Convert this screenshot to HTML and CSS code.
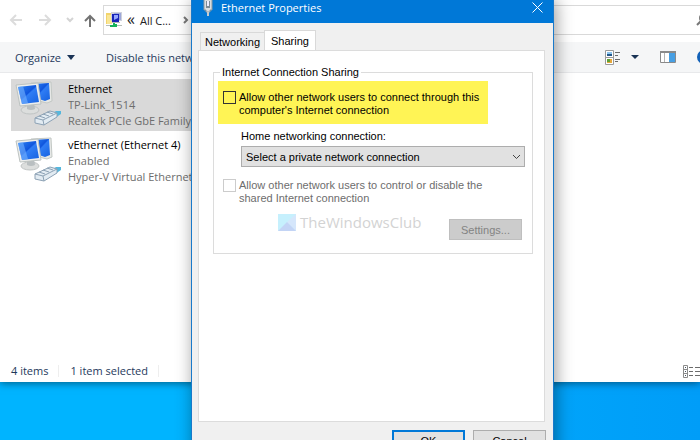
FILE: index.html
```html
<!DOCTYPE html>
<html lang="en">

<head>
    <meta charset="UTF-8">
    <meta name="viewport" content="width=device-width, initial-scale=1.0">
    <title>Ethernet Properties</title>
    <link rel="stylesheet" href="styles.css">
</head>

<body>
    <svg class="defs" width="0" height="0" aria-hidden="true">
        <defs>
            <linearGradient id="screen" x1="0" y1="0" x2="1" y2="1">
                <stop offset="0" stop-color="#2f86f5" />
                <stop offset="0.45" stop-color="#0f55dd" />
                <stop offset="0.5" stop-color="#2f7df5" />
                <stop offset="1" stop-color="#1762e0" />
            </linearGradient>
            <symbol id="network" viewBox="0 0 48 48">
                <path d="M16 2 L36 1 L37 20 L32 22 L16 18z" fill="#e6e8e6" stroke="#c3c8c5" />
                <path d="M18 3 L34 2 L35 18 L30 20 L18 16z" fill="url(#screen)" />
                <ellipse cx="15" cy="29" rx="9" ry="4" fill="#dcdedd" stroke="#c0c4c4" />
                <path d="M12 22 h7 l1 6 q-4 2 -8 0z" fill="#b9bfc1" />
                <path d="M1 4 L23 2 L26 23 L5 25z" fill="#eceeed" stroke="#bdc3c1" />
                <path d="M3 6 L21 4 L24 21 L7 23z" fill="url(#screen)" />
                <path d="M3 6 L8 5 L13 22 L7 23z" fill="#74b2ff" opacity="0.6" />
                <path d="M36 33 L41 30 L46 30 L46 33 L40 37z" fill="#55b7dd" />
                <path d="M20 37 L35 30 L42 32 L42 36 L29 44 L20 42z" fill="#e2ebf2" stroke="#8da2b5" />
                <path d="M20 37 L28 39 L42 32 M28 39 L29 44 M24 35 l6 2 M28 33 l6 2 M32 31 l6 2" fill="none" stroke="#8da2b5" />
            </symbol>
        </defs>
    </svg>

    <main class="explorer">
        <nav class="nav-bar">
            <button type="button" aria-label="Back">
                <svg width="14" height="12" viewBox="0 0 14 12"><path d="M13 6H2M7 1L2 6l5 5" fill="none" stroke="#dcdcdc" stroke-width="2" /></svg>
            </button>
            <button type="button" aria-label="Forward">
                <svg width="14" height="12" viewBox="0 0 14 12"><path d="M1 6h11M7 1l5 5-5 5" fill="none" stroke="#dcdcdc" stroke-width="2" /></svg>
            </button>
            <button type="button" class="recent" aria-label="Recent locations">
                <svg width="8" height="6" viewBox="0 0 8 6"><path d="M1 1l3 3 3-3" fill="none" stroke="#d4d4d4" stroke-width="2" /></svg>
            </button>
            <button type="button" aria-label="Up">
                <svg width="12" height="13" viewBox="0 0 12 13"><path d="M6 13V2M1 7l5-5 5 5" fill="none" stroke="#737373" stroke-width="2" /></svg>
            </button>
            <div class="address">
                <svg width="16" height="16" viewBox="0 0 16 16">
                    <path d="M0 1h5l1 1v10H0z" fill="#f2d46c" />
                    <path d="M1 3h5v9H1z" fill="#f9e696" />
                    <rect x="5" y="0" width="11" height="9" fill="#cfd1dc" />
                    <rect x="8" y="1" width="7" height="7" fill="#9ea8d9" />
                    <rect x="6" y="2" width="7" height="8" fill="#1723b8" />
                    <path d="M8 3h4v3L8 8z" fill="#95a6ff" />
                    <rect x="6" y="10" width="8" height="1" fill="#b4b4bd" />
                    <path d="M0 13h16v1H0z" fill="#b6bdb9" />
                    <path d="M7 11h2v1h2v3H4v-2h3z" fill="#17b35b" />
                </svg>
                <span class="chevrons">«</span>
                <span>All C...</span>
                <svg class="crumb" width="6" height="8" viewBox="0 0 6 8"><path d="M1 1l3 3-3 3" fill="none" stroke="#777" stroke-width="2" /></svg>
                <svg class="search" width="12" height="12" viewBox="0 0 12 12"><path d="M1 11l4-4" stroke="#777" stroke-width="2" /><circle cx="7" cy="4" r="3" fill="none" stroke="#777" stroke-width="2" /></svg>
            </div>
        </nav>

        <div class="toolbar">
            <button type="button">Organize <svg width="8" height="5" viewBox="0 0 8 5"><path d="M0 0h8L4 5z" fill="#1a3355" /></svg></button>
            <button type="button">Disable this network device</button>
            <div class="view-tools">
                <button type="button" aria-label="Change view">
                    <svg width="15" height="15" viewBox="0 0 15 15">
                        <path d="M0.500 0.500h8v14h-8zM0.500 7.500h8" fill="#fff" stroke="#9a9a9a" />
                        <path d="M2 2h5v4H2z" fill="#8cc5f0" />
                        <path d="M2 4h5v2H2z" fill="#25598a" />
                        <path d="M2 9h5v4H2z" fill="#e6a83b" />
                        <path d="M2 9h3v3H2z" fill="#5f9f35" />
                        <path d="M10 2.500h5M10 5.500h3M10 9.500h5M10 11.500h3" stroke="#6c6c6c" />
                    </svg>
                    <svg width="8" height="4" viewBox="0 0 8 4"><path d="M0 0h8L4 4z" fill="#1a3355" /></svg>
                </button>
                <button type="button" aria-label="Preview pane">
                    <svg width="16" height="12" viewBox="0 0 16 12">
                        <path d="M0.500 0.500h15v11h-15z" fill="#fff" stroke="#8a8a8a" />
                        <path d="M0 0h16v2H0z" fill="#8a8a8a" />
                        <path d="M4.500 2v9" stroke="#b5b5b5" />
                        <path d="M9 2h6v9H9z" fill="#479fe3" />
                    </svg>
                </button>
                <button type="button" aria-label="Help">
                    <svg width="14" height="14" viewBox="0 0 14 14"><circle cx="7" cy="7" r="7" fill="#1261b8" /></svg>
                </button>
            </div>
        </div>

        <ul class="connections">
            <li class="connection selected">
                <svg width="48" height="48"><use href="#network" /></svg>
                <div>
                    <p class="name">Ethernet</p>
                    <p>TP-Link_1514</p>
                    <p>Realtek PCIe GbE Family Controller</p>
                </div>
            </li>
            <li class="connection">
                <svg width="48" height="48"><use href="#network" /></svg>
                <div>
                    <p class="name">vEthernet (Ethernet 4)</p>
                    <p>Enabled</p>
                    <p>Hyper-V Virtual Ethernet Adapter</p>
                </div>
            </li>
        </ul>

        <footer class="status-bar">
            <span>4 items</span>
            <span>1 item selected</span>
            <svg width="17" height="13" viewBox="0 0 17 13">
                <path d="M0.500 0.500h4v12h-4zM0.500 4.500h4M0.500 8.500h4" fill="none" stroke="#8b8b8b" />
                <path d="M2 2.500h1M2 6.500h1M2 10.500h1" stroke="#456" />
                <path d="M6 2.500h4M12 2.500h5M6 6.500h4M12 6.500h5M6 10.500h4M12 10.500h5" stroke="#6c6c6c" />
            </svg>
        </footer>
    </main>

    <section class="dialog" role="dialog" aria-labelledby="dialog-title">
        <header class="title-bar">
            <svg width="10" height="17" viewBox="0 0 10 17">
                <path d="M1 0h8v11H7v2H3v-2H1z" fill="#d8dde0" stroke="#8b979f" />
                <path d="M3 2h4v7H3z" fill="#7d8b95" />
                <path d="M4 2h2v5H4z" fill="#eef" />
                <path d="M5 13v4" stroke="#c5ccd2" stroke-width="2" />
            </svg>
            <h1 id="dialog-title">Ethernet Properties</h1>
            <button type="button" aria-label="Close">
                <svg width="11" height="11" viewBox="0 0 11 11"><path d="M0.500 0.500l10 10M10.500 0.500l-10 10" stroke="#fff" /></svg>
            </button>
        </header>

        <div class="dialog-body">
            <div class="tabs" role="tablist">
                <button type="button" role="tab" class="tab">Networking</button>
                <button type="button" role="tab" class="tab active" aria-selected="true">Sharing</button>
            </div>

            <form class="panel" id="sharing">
                <fieldset>
                    <legend>Internet Connection Sharing</legend>
                    <div class="option highlight">
                        <input type="checkbox" id="allow-connect">
                        <label for="allow-connect">Allow other network users to connect through this computer's Internet connection</label>
                    </div>
                    <div class="home">
                        <label for="home-network">Home networking connection:</label>
                        <select id="home-network">
                            <option>Select a private network connection</option>
                        </select>
                    </div>
                    <div class="option disabled">
                        <input type="checkbox" id="allow-control" disabled>
                        <label for="allow-control">Allow other network users to control or disable the shared Internet connection</label>
                    </div>
                    <div class="settings">
                        <div class="watermark">
                            <svg width="18" height="17" viewBox="0 0 18 17">
                                <path d="M0 0h18v17H0z" fill="#c6f0fd" />
                                <path d="M18 0v17L9 8z" fill="#d5e6fb" />
                                <path d="M0 17L9 8l9 9z" fill="#c3d4f5" />
                            </svg>
                            <span>TheWindowsClub</span>
                        </div>
                        <button type="button" class="push" disabled>Settings...</button>
                    </div>
                </fieldset>
            </form>

            <div class="actions">
                <button type="submit" form="sharing" class="push default">OK</button>
                <button type="button" class="push">Cancel</button>
            </div>
        </div>
    </section>
</body>

</html>
```

FILE: styles.css
```css
* {
    margin: 0;
    padding: 0;
    box-sizing: border-box;
}

body {
    position: relative;
    display: flex;
    flex-direction: column;
    height: 100vh;
    padding-bottom: 58px;
    overflow: hidden;
    background: linear-gradient(to right, #00b4ff 25%, #009df8);
    font-family: "Open Sans", "Noto Sans", sans-serif;
    font-size: 11px;
}

button {
    border: none;
    background: none;
    font: inherit;
    color: inherit;
}

svg {
    display: block;
    flex-shrink: 0;
}

.defs {
    position: absolute;
}

/* Explorer window */
.explorer {
    flex: 1;
    display: flex;
    flex-direction: column;
    overflow: hidden;
    background-color: white;
    color: #1e395b;
    box-shadow: 0 1px 8px rgba(0, 0, 0, 0.5);
}

.nav-bar {
    display: flex;
    align-items: center;
    gap: 15px;
    height: 42px;
    padding: 5px 0 7px 9px;
}

.nav-bar .recent {
    margin: 0 -5px 0 -1px;
}

.address {
    flex: 1;
    align-self: stretch;
    display: flex;
    align-items: center;
    gap: 7px;
    margin: 0 -9px 0 -8px;
    padding-left: 2px;
    border: 1px solid #d9d9d9;
    color: #222;
}

.chevrons {
    margin: 0 -2px;
    padding-bottom: 3px;
    font-size: 16px;
    line-height: 16px;
}

.crumb {
    margin-left: 5px;
}

.search {
    margin-left: auto;
}

.toolbar {
    display: flex;
    align-items: center;
    gap: 31px;
    height: 31px;
    padding-left: 15px;
    background-color: #f5f6f7;
    border-bottom: 1px solid #e8e9eb;
}

.toolbar button {
    display: flex;
    align-items: center;
    gap: 6px;
    white-space: nowrap;
}

.view-tools {
    display: flex;
    gap: 21px;
    margin-left: auto;
    margin-right: -11px;
}

.view-tools button:first-child {
    gap: 11px;
}

.connections {
    flex: 1;
    padding: 6px 11px;
    list-style: none;
}

.connection {
    display: flex;
    gap: 5px;
    width: 250px;
    margin-bottom: 4px;
    padding: 2px 4px;
    color: #6d6d6d;
    line-height: 16px;
    white-space: nowrap;
    overflow: hidden;
}

.connection.selected {
    background-color: #d9d9d9;
}

.connection .name {
    color: black;
}

.status-bar {
    display: flex;
    align-items: center;
    height: 22px;
    padding-left: 11px;
}

.status-bar span {
    margin-right: 11px;
    padding-right: 10px;
    border-right: 1px solid #eeeeee;
    line-height: 12px;
}

.status-bar svg {
    margin-left: auto;
}

/* Properties dialog */
.dialog {
    position: absolute;
    top: 0;
    bottom: -20px;
    left: 191px;
    display: flex;
    flex-direction: column;
    width: 363px;
    background-color: #f0f0f0;
    border: 1px solid #1979ca;
    border-top: none;
    box-shadow: 2px 0 16px rgba(0, 0, 0, 0.4);
    color: black;
    font-family: "Liberation Sans", Arial, sans-serif;
    font-size: 11px;
}

.title-bar {
    display: flex;
    align-items: center;
    gap: 8px;
    height: 23px;
    padding: 0 10px 9px 11px;
    background-color: #0078d7;
    color: white;
}

.title-bar h1 {
    flex: 1;
    font-family: "Open Sans", "Noto Sans", sans-serif;
    font-size: 11px;
    font-weight: normal;
}

.dialog-body {
    flex: 1;
    display: flex;
    flex-direction: column;
    padding: 7px 8px 8px 6px;
}

.tabs {
    display: flex;
    align-items: flex-end;
    padding-left: 2px;
}

.tab {
    height: 18px;
    padding: 0 4px;
    border: 1px solid #d9d9d9;
    border-bottom: none;
}

.tab.active {
    height: 21px;
    margin: 0 0 -1px -1px;
    padding: 0 6px;
    background-color: white;
}

.panel {
    flex: 1;
    padding: 14px 11px 0 14px;
    background-color: white;
    border: 1px solid #dcdcdc;
}

fieldset {
    padding: 0 7px 13px 4px;
    border: 1px solid #dcdcdc;
}

legend {
    margin-left: 2px;
    padding: 0 2px;
    line-height: 14px;
}

.option {
    display: flex;
    gap: 3px;
    padding: 9px 2px 7px 5px;
    line-height: 13px;
}

.option.highlight {
    margin: 2px 37px 5px 0;
    padding-top: 10px;
    background-color: #fff455;
}

.option.disabled {
    margin-right: 37px;
    color: #6d6d6d;
}

input[type="checkbox"] {
    appearance: none;
    flex-shrink: 0;
    width: 13px;
    height: 13px;
    border: 1px solid #333;
}

input[type="checkbox"]:disabled {
    border-color: #cccccc;
}

.home {
    display: flex;
    flex-direction: column;
    gap: 3px;
    padding: 0 0 3px 23px;
    line-height: 14px;
}

select {
    appearance: none;
    height: 21px;
    padding: 0 4px;
    border: 1px solid #adadad;
    background: #e1e1e1 url('data:image/svg+xml,<svg xmlns="http://www.w3.org/2000/svg" width="9" height="6"><path d="M1 1l3.500 3.500L8 1" fill="none" stroke="%23444"/></svg>') no-repeat right 3px center;
    font: inherit;
    color: black;
}

.settings {
    display: flex;
    align-items: flex-end;
    justify-content: space-between;
    padding: 0 3px 0 60px;
}

.watermark {
    display: flex;
    align-items: center;
    gap: 4px;
    margin-bottom: 8px;
    color: #d3d3d3;
    font-family: "Open Sans", "Noto Sans", sans-serif;
    font-size: 15px;
    line-height: 20px;
}

.push {
    width: 73px;
    height: 21px;
    border: 1px solid #adadad;
    background-color: #e1e1e1;
}

.push:disabled {
    background-color: #cccccc;
    border-color: #bfbfbf;
    color: #838383;
}

.push.default {
    border: 2px solid #0078d7;
}

.actions {
    display: flex;
    justify-content: flex-end;
    gap: 8px;
    margin-right: -1px;
    padding-top: 8px;
}
```
